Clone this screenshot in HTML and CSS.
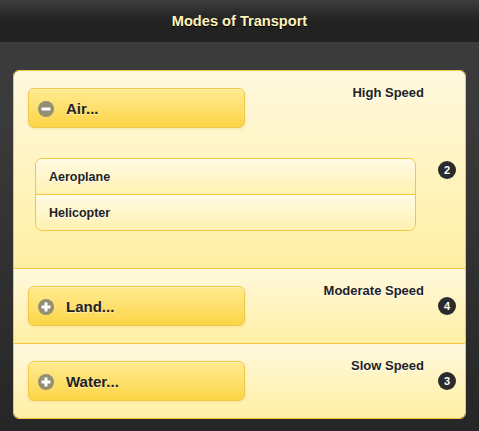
FILE: index.html
```html
<!DOCTYPE html>
<html>
<head>
<meta charset="utf-8">
<link rel="stylesheet" href="styles.css">
</head>
<body>
<div class="header"><h1 class="title">Modes of Transport</h1></div>
<div class="content">
  <ul class="list">
    <li class="row row-open">
      <div class="btn">
        <span class="icon"><svg width="16" height="16" viewBox="0 0 16 16"><circle cx="8" cy="8" r="8" fill="#928f74"/><rect x="3.5" y="6.5" width="9" height="3" fill="#fff"/></svg></span>
        <span class="btn-text">Air...</span>
      </div>
      <ul class="sub">
        <li class="sub-item">Aeroplane</li>
        <li class="sub-item">Helicopter</li>
      </ul>
      <p class="aside">High Speed</p>
      <span class="count">2</span>
    </li>
    <li class="row">
      <div class="btn">
        <span class="icon"><svg width="16" height="16" viewBox="0 0 16 16"><circle cx="8" cy="8" r="8" fill="#928f74"/><rect x="3.5" y="6.5" width="9" height="3" fill="#fff"/><rect x="6.5" y="3.5" width="3" height="9" fill="#fff"/></svg></span>
        <span class="btn-text">Land...</span>
      </div>
      <p class="aside">Moderate Speed</p>
      <span class="count">4</span>
    </li>
    <li class="row">
      <div class="btn">
        <span class="icon"><svg width="16" height="16" viewBox="0 0 16 16"><circle cx="8" cy="8" r="8" fill="#928f74"/><rect x="3.5" y="6.5" width="9" height="3" fill="#fff"/><rect x="6.5" y="3.5" width="3" height="9" fill="#fff"/></svg></span>
        <span class="btn-text">Water...</span>
      </div>
      <p class="aside">Slow Speed</p>
      <span class="count">3</span>
    </li>
  </ul>
</div>
</body>
</html>
```
FILE: styles.css
```css
html, body {
  margin: 0;
  padding: 0;
}
body {
  font-family: "Liberation Sans", Arial, sans-serif;
  background: linear-gradient(#3c3c3c 0px, #3a3a3a 120px, #262626 431px);
  min-height: 431px;
}
.header {
  height: 41px;
  background: linear-gradient(#3e3e3e 0px, #2c2c2c 12px, #222 22px, #222 41px);
  border-bottom: 1px solid #222;
  display: flex;
  align-items: center;
  justify-content: center;
}
.title {
  margin: 0;
  font-size: 14.6px;
  font-weight: bold;
  color: #fff3bd;
  text-shadow: 0 1px 0 #000;
  padding-top: 1px;
}
.content {
  padding: 28px 13px 0 13px;
}
.list {
  list-style: none;
  margin: 0;
  padding: 0;
  border: 1px solid #f4c63f;
  border-radius: 6px;
  overflow: hidden;
}
.row {
  position: relative;
  padding: 17px 14px 17px 14px;
  background: linear-gradient(#fff9de, #ffefa3);
  border-top: 1px solid #f4c63f;
}
.row:first-child {
  border-top: none;
}
.row-open {
  padding-bottom: 37px;
}
.btn {
  width: 215px;
  height: 38px;
  border: 1px solid #f1c84e;
  border-radius: 6px;
  background: linear-gradient(#ffeb8e 0%, #fee172 45%, #fcd544 100%);
  box-shadow: 0 1px 3px rgba(200, 160, 30, 0.18), inset 0 1px 0 rgba(255, 255, 255, 0.35);
  display: flex;
  align-items: center;
}
.icon {
  display: flex;
  margin-left: 9px;
  width: 16px;
  height: 16px;
  margin-top: 1px;
}
.btn-text {
  margin-left: 12px;
  font-size: 15px;
  font-weight: bold;
  color: #222;
  text-shadow: 0 1px 0 rgba(255, 255, 255, 0.6);
}
.sub {
  list-style: none;
  margin: 30px 35px 0 7px;
  padding: 0;
  border: 1px solid #f4c63f;
  border-radius: 7px;
  overflow: hidden;
}
.sub-item {
  height: 35px;
  display: flex;
  align-items: center;
  padding-left: 13px;
  font-size: 12.5px;
  font-weight: bold;
  color: #222;
  text-shadow: 0 1px 0 #fff;
  background: linear-gradient(#fffbe5, #fff1b0);
}
.sub-item + .sub-item {
  border-top: 1px solid #f4c63f;
}
.aside {
  position: absolute;
  margin: 0;
  top: 14px;
  right: 41px;
  font-size: 13px;
  font-weight: bold;
  color: #222;
  text-shadow: 0 1px 0 #fff;
}
.count {
  position: absolute;
  right: 9px;
  top: 50%;
  margin-top: -9px;
  width: 18px;
  height: 18px;
  border-radius: 50%;
  background: #2b2b2b;
  color: #fff;
  font-size: 11px;
  font-weight: bold;
  display: flex;
  align-items: center;
  justify-content: center;
}
```
